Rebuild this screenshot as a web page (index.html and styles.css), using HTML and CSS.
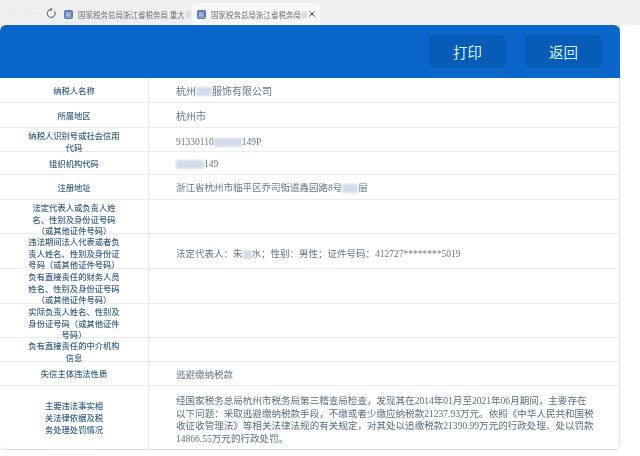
FILE: index.html
```html
<!DOCTYPE html>
<html lang="en">
<head>
    <meta charset="UTF-8">
    <meta name="viewport" content="width=device-width, initial-scale=1.0">
    <title>国家税务总局浙江省税务局</title>
    <link rel="stylesheet" href="styles.css">
</head>
<body>

<div class="tabbar">
    <div class="nav">
        <svg width="12" height="12" viewBox="0 0 12 12" fill="none" stroke="#e2e2e2" stroke-width="1"><path d="M8 2L4 6l4 4"/></svg>
        <svg width="12" height="12" viewBox="0 0 12 12" fill="none" stroke="#e2e2e2" stroke-width="1"><path d="M4 2l4 4-4 4"/></svg>
        <svg width="12" height="12" viewBox="0 0 12 12" fill="none" stroke="#555" stroke-width="1"><path d="M9.6 4.2A4 4 0 1 1 6 2.4"/><path d="M5.2 0.8L7.2 2.4 5.2 4" stroke-width="0.9"/></svg>
    </div>
    <div class="tab">
        <span class="tab-icon">税</span>
        <span class="tab-title">国家税务总局浙江省税务局 重大</span>
        <span class="fade"></span>
    </div>
    <div class="tab active">
        <span class="tab-icon">税</span>
        <span class="tab-title">国家税务总局浙江省税务局</span>
        <span class="fade"></span>
        <svg class="tab-close" width="8" height="8" viewBox="0 0 8 8" stroke="#444" stroke-width="1"><path d="M1.5 1.5l5 5M6.5 1.5l-5 5"/></svg>
    </div>
</div>

<div class="card">
    <div class="card-head">
        <button class="btn" type="button">打印</button>
        <button class="btn" type="button">返回</button>
    </div>

    <div class="row h25">
        <div class="label">纳税人名称</div>
        <div class="value big">杭州<span class="redact w16"></span>服饰有限公司</div>
    </div>
    <div class="row h25">
        <div class="label">所属地区</div>
        <div class="value big">杭州市</div>
    </div>
    <div class="row h24">
        <div class="label">纳税人识别号或社会信用<br>代码</div>
        <div class="value">91330110<span class="redact w28"></span>149P</div>
    </div>
    <div class="row h23">
        <div class="label">组织机构代码</div>
        <div class="value"><span class="redact w28"></span>149</div>
    </div>
    <div class="row h25">
        <div class="label">注册地址</div>
        <div class="value">浙江省杭州市临平区乔司街道鑫园路8号<span class="redact w16"></span>层</div>
    </div>
    <div class="row h34">
        <div class="label">法定代表人或负责人姓<br>名、性别及身份证号码<br>（或其他证件号码）</div>
        <div class="value"></div>
    </div>
    <div class="row h35">
        <div class="label">违法期间法人代表或者负<br>责人姓名、性别及身份证<br>号码（或其他证件号码）</div>
        <div class="value">法定代表人：朱<span class="redact w10"></span>水；性别：男性；证件号码：412727********5019</div>
    </div>
    <div class="row h35">
        <div class="label">负有直接责任的财务人员<br>姓名、性别及身份证号码<br>（或其他证件号码）</div>
        <div class="value"></div>
    </div>
    <div class="row h34">
        <div class="label">实际负责人姓名、性别及<br>身份证号码（或其他证件<br>号码）</div>
        <div class="value"></div>
    </div>
    <div class="row h24">
        <div class="label">负有直接责任的中介机构<br>信息</div>
        <div class="value"></div>
    </div>
    <div class="row h24">
        <div class="label">失信主体违法性质</div>
        <div class="value">逃避缴纳税款</div>
    </div>
    <div class="row h63 last">
        <div class="label wide">主要违法事实相<br>关法律依据及税<br>务处理处罚情况</div>
        <div class="value para">经国家税务总局杭州市税务局第三稽查局检查，发现其在2014年01月至2021年06月期间，主要存在<br>以下问题：采取逃避缴纳税款手段，不缴或者少缴应纳税款21237.93万元。依照《中华人民共和国税<br>收征收管理法》等相关法律法规的有关规定，对其处以追缴税款21390.99万元的行政处理、处以罚款<br>14866.55万元的行政处罚。</div>
    </div>
</div>

</body>
</html>
```

FILE: styles.css
```css
body {
    margin: 0;
    background-color: #fff;
    font-family: "Liberation Serif", "Noto Sans CJK SC", sans-serif;
    overflow: hidden;
}
.tabbar {
    display: flex;
    height: 25px;
    background-color: #efefef;
    padding-top: 3px;
    box-sizing: border-box;
    font-family: "Noto Sans CJK SC", sans-serif;
}
.nav {
    display: flex;
    align-items: center;
    gap: 7px;
    width: 60px;
    padding-left: 7px;
    box-sizing: border-box;
    margin-top: -3px;
}
.tab {
    display: flex;
    align-items: center;
    width: 132px;
    padding-left: 4px;
    box-sizing: border-box;
    gap: 5px;
    color: #6b6b6b;
    font-size: 7.5px;
    white-space: nowrap;
    filter: blur(0.2px);
}
.tab.active {
    width: 128px;
    background-color: #f9f9f9;
    border-radius: 4px 4px 0 0;
    padding-left: 5px;
}
.tab-icon {
    flex: none;
    width: 9px;
    height: 9px;
    border-radius: 2px;
    background-color: #5b78b8;
    color: #d8e2f4;
    font-size: 6px;
    line-height: 9px;
    text-align: center;
}
.fade {
    flex: none;
    width: 5px;
    height: 7px;
    margin-left: -4px;
    background-color: #dcdcdc;
}
.tab-close {
    flex: none;
    margin-left: -4px;
}
.card {
    width: 619px;
    border-right: 1px solid #e2e2e2;
    border-bottom: 1px solid #dcdcdc;
    border-radius: 0 0 5px 5px;
    box-sizing: content-box;
}
.card-head {
    display: flex;
    justify-content: flex-end;
    gap: 19px;
    height: 53px;
    padding: 10px 18px 0 0;
    box-sizing: border-box;
    background-color: #0a66cb;
    border-radius: 6px 6px 0 0;
    margin-right: -1px;
}
.btn {
    width: 77px;
    height: 33px;
    border: none;
    border-radius: 5px;
    background-color: #075cb8;
    color: #d6f0ff;
    font-family: "Noto Sans CJK SC", sans-serif;
    font-size: 14.5px;
    padding: 0;
}
.row {
    display: grid;
    grid-template-columns: 149px 1fr;
    box-sizing: border-box;
    border-bottom: 1px solid #ececec;
}
.row.last {
    border-bottom: none;
}
.h23 { height: 23px; }
.h24 { height: 24px; }
.h25 { height: 25px; }
.h34 { height: 34px; }
.h35 { height: 35px; }
.h63 { height: 63px; }
.label {
    display: flex;
    align-items: center;
    justify-content: center;
    padding-top: 3px;
    box-sizing: border-box;
    text-align: center;
    border-right: 1px solid #e8e8e8;
    color: #3c6288;
    font-size: 8.3px;
    font-weight: 500;
    line-height: 11.5px;
    filter: blur(0.3px);
}
.label.wide {
    line-height: 12px;
}
.value {
    display: flex;
    align-items: center;
    padding: 3px 0 0 27px;
    box-sizing: border-box;
    color: #66788c;
    font-size: 9.5px;
    line-height: 13px;
    white-space: nowrap;
    filter: blur(0.25px);
}
.value.big {
    font-size: 10px;
}
.para {
    display: block;
    padding-top: 9px;
    color: #5a7088;
    font-size: 9.55px;
    line-height: 12.7px;
}
.redact {
    display: inline-block;
    height: 9px;
    background-color: #d3dcea;
    filter: blur(1px);
}
.w10 { width: 9px; }
.w16 { width: 16px; }
.w28 { width: 28px; }
```
